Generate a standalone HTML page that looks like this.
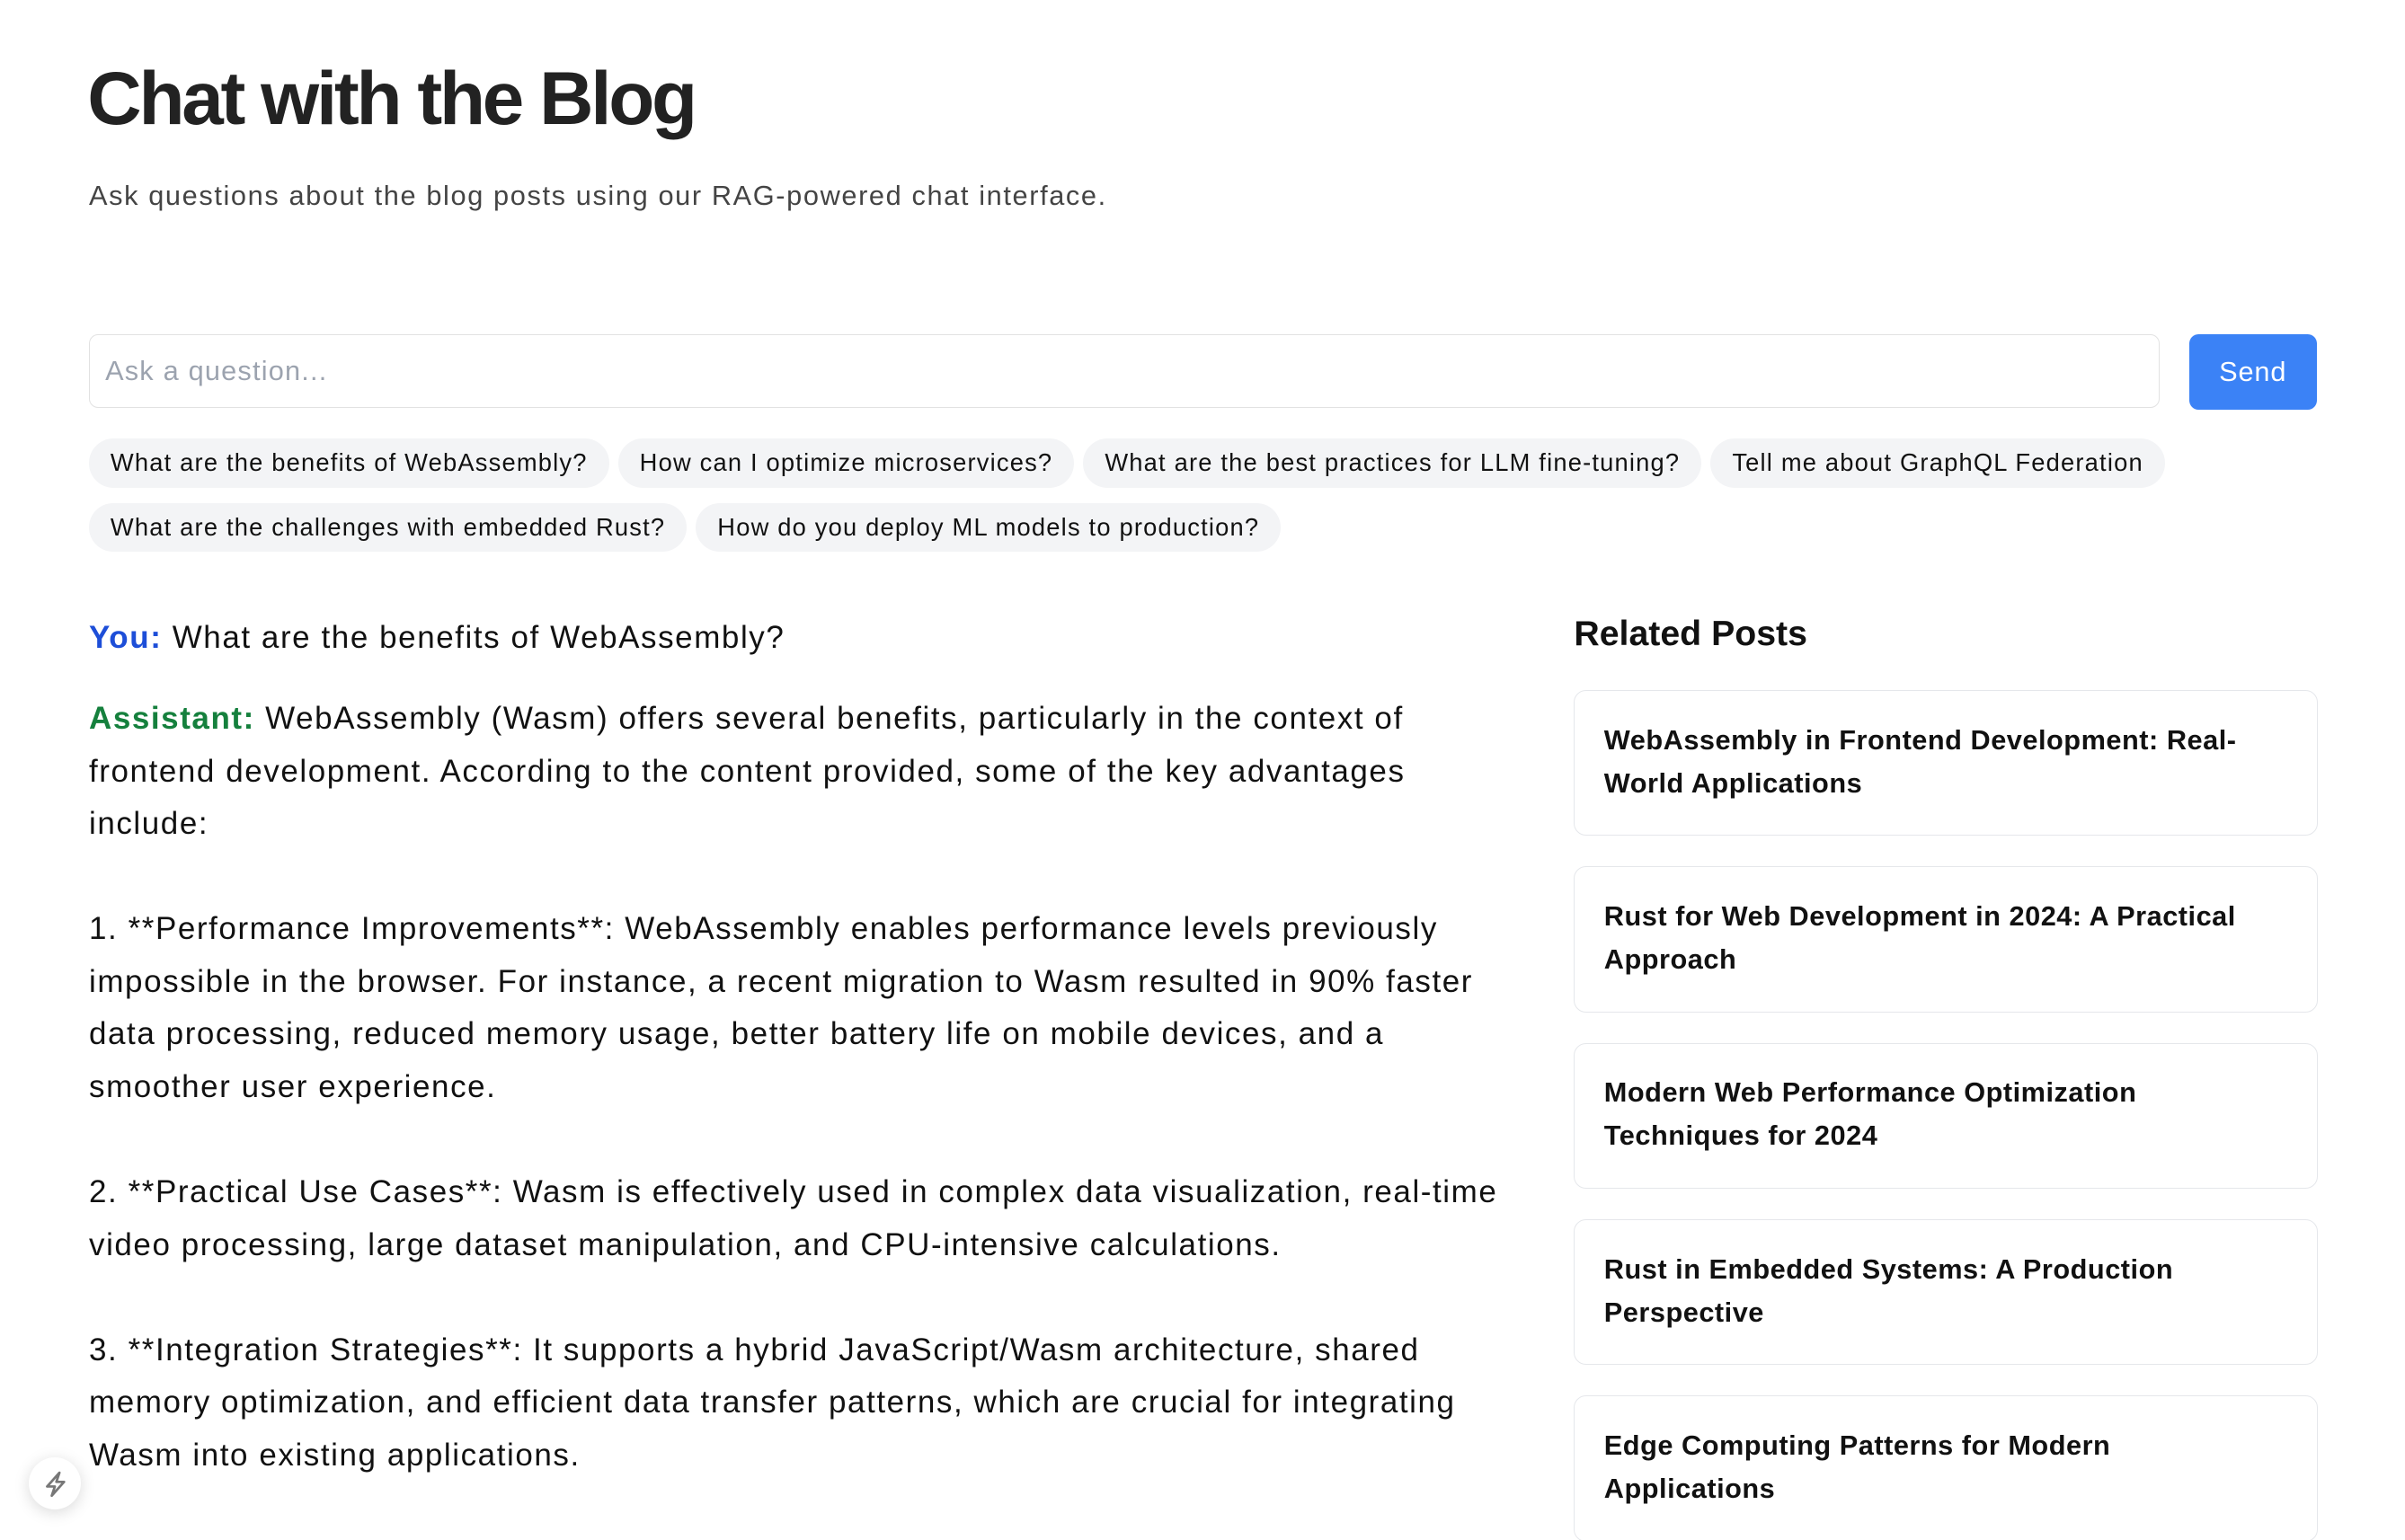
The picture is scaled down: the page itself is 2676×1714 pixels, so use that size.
<!DOCTYPE html>
<html><head><meta charset="utf-8"><style>
html,body{margin:0;padding:0;background:#fff;overflow:hidden}
body{width:2676px;height:1714px;font-family:"Liberation Sans",Arial,sans-serif;color:#111}
#z{zoom:1.707;width:1568px;height:1005px;position:relative}
h1{position:absolute;left:57px;top:34px;margin:0;font-size:49px;font-weight:700;color:#222;letter-spacing:-1.9px;line-height:60px}
.sub{position:absolute;left:58px;top:117px;font-size:18px;color:#444;letter-spacing:0.95px}
.inp{position:absolute;left:58px;top:218px;width:1350px;height:48px;border:1px solid #e2e2e2;border-radius:6px;box-sizing:border-box}
.inp span{position:absolute;left:10px;top:13px;font-size:18px;color:#9ca3af;letter-spacing:0.7px}
.send{position:absolute;left:1427px;top:218px;width:83px;height:49px;background:#3b82f6;border-radius:6px;color:#fff;font-size:18px;text-align:center;line-height:49px;letter-spacing:0.5px}
.chips{position:absolute;left:58px;top:286px;width:1470px}
.chip{display:inline-block;height:32px;line-height:32px;padding:0 14px;background:#f3f4f6;border-radius:16px;font-size:16px;margin:0 6px 10px 0;color:#111;letter-spacing:0.7px}
.chat{position:absolute;left:58px;top:399px;width:940px;font-size:20.5px;line-height:34.3px;white-space:nowrap;letter-spacing:0.92px}
.you{color:#1d4ed8;font-weight:700}
.as{color:#15803d;font-weight:700}
.rp{position:absolute;left:1026px;top:400px;font-size:23px;font-weight:700;color:#111}
.card{position:absolute;left:1026px;width:485px;height:95px;border:1px solid #e5e7eb;border-radius:8px;box-sizing:border-box;padding:18px 19px;font-size:18px;line-height:28px;font-weight:600;color:#111;letter-spacing:0.3px}
.bolt{position:absolute;left:19px;top:950px;width:34px;height:34px;border-radius:50%;background:#fff;box-shadow:0 2px 10px rgba(0,0,0,.15)}
</style></head><body><div id="z">
<h1>Chat with the Blog</h1>
<div class="sub">Ask questions about the blog posts using our RAG-powered chat interface.</div>
<div class="inp"><span>Ask a question...</span></div>
<div class="send">Send</div>
<div class="chips">
<span class="chip">What are the benefits of WebAssembly?</span><span class="chip">How can I optimize microservices?</span><span class="chip">What are the best practices for LLM fine-tuning?</span><span class="chip">Tell me about GraphQL Federation</span><br>
<span class="chip">What are the challenges with embedded Rust?</span><span class="chip">How do you deploy ML models to production?</span>
</div>
<div class="chat">
<div><span class="you">You:</span> What are the benefits of WebAssembly?</div>
<div style="margin-top:18.5px"><span class="as">Assistant:</span> WebAssembly (Wasm) offers several benefits, particularly in the context of<br>frontend development. According to the content provided, some of the key advantages<br>include:<br><br>1. **Performance Improvements**: WebAssembly enables performance levels previously<br>impossible in the browser. For instance, a recent migration to Wasm resulted in 90% faster<br>data processing, reduced memory usage, better battery life on mobile devices, and a<br>smoother user experience.<br><br>2. **Practical Use Cases**: Wasm is effectively used in complex data visualization, real-time<br>video processing, large dataset manipulation, and CPU-intensive calculations.<br><br>3. **Integration Strategies**: It supports a hybrid JavaScript/Wasm architecture, shared<br>memory optimization, and efficient data transfer patterns, which are crucial for integrating<br>Wasm into existing applications.</div>
</div>
<div class="rp">Related Posts</div>
<div class="card" style="top:450px">WebAssembly in Frontend Development: Real-<br>World Applications</div>
<div class="card" style="top:565px">Rust for Web Development in 2024: A Practical<br>Approach</div>
<div class="card" style="top:680px">Modern Web Performance Optimization<br>Techniques for 2024</div>
<div class="card" style="top:795px">Rust in Embedded Systems: A Production<br>Perspective</div>
<div class="card" style="top:910px">Edge Computing Patterns for Modern<br>Applications</div>
<div class="bolt"><svg width="34" height="34" viewBox="0 0 34 34"><path d="M20 10 L12 19 H17 L15 25 L23 16 H18 Z" fill="none" stroke="#777" stroke-width="1.6" stroke-linejoin="round"/></svg></div>
</div></body></html>
